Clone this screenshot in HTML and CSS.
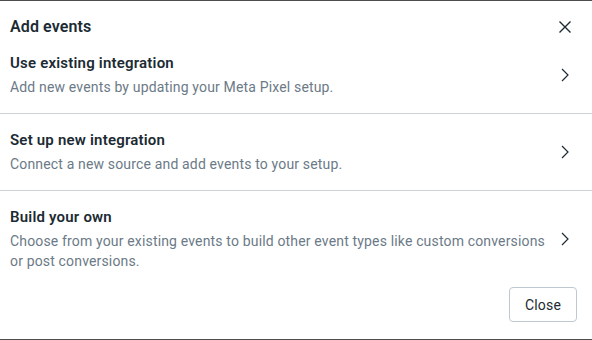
FILE: index.html
```html
<!DOCTYPE html>
<html lang="en">
<head>
	<meta charset="UTF-8">
	<title>Add events</title>
	<link rel="stylesheet" href="styles.css">
</head>
<body>
	<div class="dialog">
		<div class="dialog-header">
			<h1>Add events</h1>
			<button type="button" class="icon-btn" aria-label="Close">
				<svg width="24" height="24" viewBox="0 0 24 24"><path d="M6.5 6.5l11 11M17.5 6.5l-11 11" stroke="#1c2b33" stroke-width="1.4" fill="none"/></svg>
			</button>
		</div>
		<div class="option">
			<div class="option-text">
				<div class="option-title">Use existing integration</div>
				<div class="option-desc">Add new events by updating your Meta Pixel setup.</div>
			</div>
			<svg class="chevron" width="24" height="24" viewBox="0 0 24 24"><path d="M9 6l6 6-6 6" stroke="#1c2b33" stroke-width="1.2" fill="none"/></svg>
		</div>
		<div class="option">
			<div class="option-text">
				<div class="option-title">Set up new integration</div>
				<div class="option-desc">Connect a new source and add events to your setup.</div>
			</div>
			<svg class="chevron" width="24" height="24" viewBox="0 0 24 24"><path d="M9 6l6 6-6 6" stroke="#1c2b33" stroke-width="1.2" fill="none"/></svg>
		</div>
		<div class="option last">
			<div class="option-text">
				<div class="option-title">Build your own</div>
				<div class="option-desc">Choose from your existing events to build other event types like custom conversions or post conversions.</div>
			</div>
			<svg class="chevron" width="24" height="24" viewBox="0 0 24 24"><path d="M9 6l6 6-6 6" stroke="#1c2b33" stroke-width="1.2" fill="none"/></svg>
		</div>
		<div class="dialog-footer">
			<button type="button" class="btn">Close</button>
		</div>
	</div>
</body>
</html>
```

FILE: styles.css
```css
body {
	margin: 0;
	padding: 1px 0;
	background-color: #4d4d4d;
	font-family: Roboto, "Liberation Sans", sans-serif;
	color: #1c2b33;
}
.dialog {
	width: 592px;
	height: 338px;
	box-sizing: border-box;
	background-color: #fff;
	display: flex;
	flex-direction: column;
}
.dialog-header {
	display: flex;
	align-items: center;
	justify-content: space-between;
	padding: 16px 15px 0 10px;
	height: 20px;
}
h1 {
	margin: 0;
	font-size: 16px;
	line-height: 20px;
	font-weight: 600;
	letter-spacing: 0.1px;
}
.icon-btn {
	border: none;
	background: none;
	padding: 0;
	width: 24px;
	height: 24px;
	cursor: pointer;
}
.icon-btn svg {
	display: block;
}
.option {
	display: flex;
	align-items: center;
	gap: 8px;
	padding: 16px 15px 16px 10px;
	border-bottom: 1px solid #cbd2d9;
	cursor: pointer;
}
.option.last {
	border-bottom: none;
}
.option-text {
	flex: 1;
}
.option-title {
	font-size: 15px;
	line-height: 20px;
	font-weight: 600;
	letter-spacing: 0.2px;
	margin-bottom: 4px;
}
.option-desc {
	font-size: 14px;
	line-height: 20px;
	letter-spacing: 0.16px;
	color: #6b7a87;
}
.chevron {
	flex-shrink: 0;
}
.dialog-footer {
	display: flex;
	justify-content: flex-end;
	padding: 0 15px;
}
.btn {
	font-family: inherit;
	font-size: 14px;
	letter-spacing: 0.2px;
	color: #1c2b33;
	background-color: #fff;
	border: 1px solid #bec8d1;
	border-radius: 4px;
	width: 68px;
	height: 35px;
	cursor: pointer;
}
```
